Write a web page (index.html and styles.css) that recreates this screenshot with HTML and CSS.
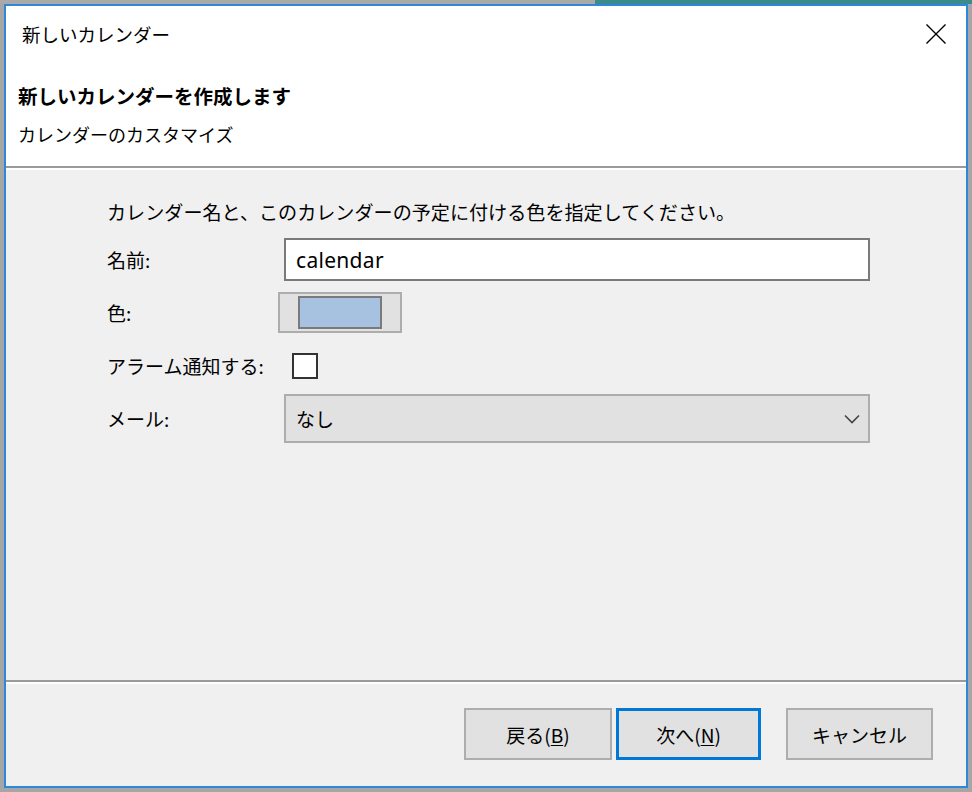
FILE: index.html
```html
<!DOCTYPE html>
<html lang="ja">
<head>
<meta charset="utf-8">
<title>新しいカレンダー</title>
<link rel="stylesheet" href="styles.css">
</head>
<body>
<div class="window">
  <div class="titlebar">
    <span class="title">新しいカレンダー</span>
    <span class="close">
      <svg width="20" height="20" viewBox="0 0 20 20"><path d="M0.5 0.5 L19.5 19.5 M19.5 0.5 L0.5 19.5" stroke="#000" stroke-width="1.4" fill="none"/></svg>
    </span>
  </div>
  <div class="header">
    <div class="header-title">新しいカレンダーを作成します</div>
    <div class="header-sub">カレンダーのカスタマイズ</div>
  </div>
  <div class="sep"></div>
  <div class="content">
    <div class="intro">カレンダー名と、このカレンダーの予定に付ける色を指定してください。</div>
    <div class="row">
      <span class="label">名前:</span>
      <div class="input">calendar</div>
    </div>
    <div class="row">
      <span class="label">色:</span>
      <div class="colorbtn"><span class="swatch"></span></div>
    </div>
    <div class="row">
      <span class="label">アラーム通知する:</span>
      <span class="checkbox"></span>
    </div>
    <div class="row">
      <span class="label">メール:</span>
      <div class="select">
        <span>なし</span>
        <svg width="16" height="10" viewBox="0 0 16 10"><path d="M1 1.5 L8 8.5 L15 1.5" stroke="#444" stroke-width="1.6" fill="none"/></svg>
      </div>
    </div>
  </div>
  <div class="sep"></div>
  <div class="footer">
    <div class="btn btn-back">戻る(<u>B</u>)</div>
    <div class="btn btn-next">次へ(<u>N</u>)</div>
    <div class="btn btn-cancel">キャンセル</div>
  </div>
</div>
</body>
</html>
```

FILE: styles.css
```css
html, body {
  margin: 0;
  padding: 0;
}

body {
  width: 972px;
  height: 792px;
  overflow: hidden;
  background: linear-gradient(to right, #a9a9a9 595px, #3b8a8c 595px) top left / 100% 4px no-repeat, #a6a6a6;
  font-family: "Noto Sans CJK JP", sans-serif;
  color: #000;
}

.window {
  box-sizing: border-box;
  margin: 4px 0 0 4px;
  width: 964px;
  height: 784px;
  border: 2px solid #2f87d8;
  background: #f0f0f0;
  display: flex;
  flex-direction: column;
}

.titlebar {
  height: 56px;
  background: #fff;
  display: flex;
  align-items: center;
  justify-content: space-between;
  padding: 0 20px 0 16px;
}

.title {
  font-size: 18.5px;
}

.close {
  display: flex;
  width: 20px;
  height: 20px;
  margin-top: -1px;
}

.header {
  height: 90px;
  background: #fff;
  padding: 14px 0 0 12px;
}

.header-title {
  font-size: 19.5px;
  font-weight: bold;
  line-height: 39px;
}

.header-sub {
  font-size: 18px;
  line-height: 39px;
}

.sep {
  height: 0;
  border-top: 2px solid #9a9a9a;
  border-bottom: 2px solid #fff;
}

.content {
  flex: 1;
  padding: 27px 0 0 101px;
}

.intro {
  font-size: 19.1px;
  line-height: 30px;
  margin-bottom: 6px;
}

.row {
  height: 53px;
  display: flex;
  align-items: center;
}

.label {
  width: 171px;
  font-size: 19px;
  flex-shrink: 0;
}

.input {
  box-sizing: border-box;
  margin-left: 6px;
  width: 586px;
  height: 43px;
  border: 2px solid #7a7a7a;
  background: #fff;
  display: flex;
  align-items: center;
  padding-left: 10px;
  font-family: "Noto Sans", "Noto Sans CJK JP", sans-serif;
  font-size: 21px;
  letter-spacing: 0.3px;
}

.colorbtn {
  box-sizing: border-box;
  width: 124px;
  height: 41px;
  border: 2px solid #adadad;
  background: #e1e1e1;
  display: flex;
  align-items: center;
  justify-content: center;
}

.swatch {
  box-sizing: border-box;
  width: 84px;
  height: 33px;
  border: 2px solid #7a7a7a;
  background: #a7c2e1;
}

.checkbox {
  box-sizing: border-box;
  margin-left: 14px;
  width: 26px;
  height: 26px;
  border: 2px solid #333;
  background: #fff;
}

.select {
  box-sizing: border-box;
  margin-left: 6px;
  width: 586px;
  height: 49px;
  border: 2px solid #adadad;
  background: #e1e1e1;
  display: flex;
  align-items: center;
  justify-content: space-between;
  padding: 0 8px 0 10px;
  font-size: 19px;
}

.footer {
  height: 102px;
  box-sizing: border-box;
  padding: 24px 33px 0 0;
  display: flex;
  justify-content: flex-end;
  align-items: flex-start;
}

.btn {
  box-sizing: border-box;
  height: 52px;
  border: 2px solid #adadad;
  background: #e1e1e1;
  display: flex;
  align-items: center;
  justify-content: center;
  font-size: 19px;
}

.btn u {
  text-underline-offset: 2px;
}

.btn-back {
  width: 148px;
  margin-right: 4px;
}

.btn-next {
  width: 145px;
  margin-right: 25px;
  border: 3px solid #0078d7;
}

.btn-cancel {
  width: 147px;
}
```
